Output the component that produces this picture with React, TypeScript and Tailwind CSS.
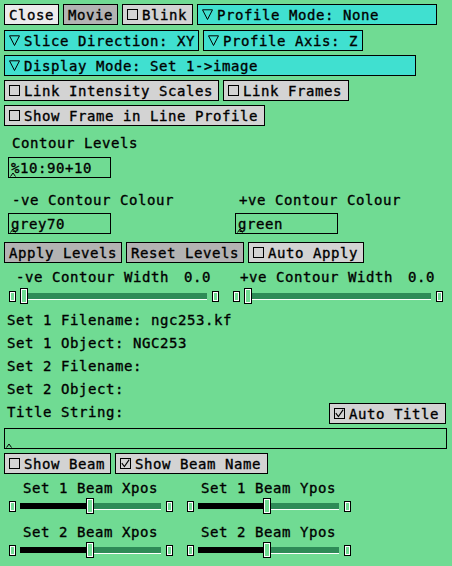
import React from "react";

function CheckBox({ checked }: { checked?: boolean }) {
  return (
    <span className="w-[11px] h-[11px] border border-black shrink-0 flex items-center justify-center">
      {checked && (
        <svg width="9" height="9" viewBox="0 0 9 9">
          <path d="M0.8 4.2 L3.4 7.6 L8.2 0.6" stroke="black" strokeWidth="1.1" fill="none" />
        </svg>
      )}
    </span>
  );
}

function Tri() {
  return (
    <svg width="11" height="11" viewBox="0 0 11 11" className="shrink-0">
      <path d="M0.5 0.8 H10.5 L5.5 10.5 Z" fill="none" stroke="black" strokeWidth="1" />
    </svg>
  );
}

function Caret() {
  return (
    <svg width="6" height="5" viewBox="0 0 6 5" className="absolute left-[1px] bottom-[0px]">
      <path d="M0.5 4.5 L3 1 L5.5 4.5" fill="none" stroke="black" strokeWidth="1" />
    </svg>
  );
}

function Btn({ cls, children }: { cls: string; children: React.ReactNode }) {
  return <div className={"h-[21px] border border-black flex items-center shrink-0 whitespace-pre " + cls}>{children}</div>;
}

function Field({ cls, text }: { cls: string; text?: string }) {
  return (
    <div className={"relative h-[21px] border border-black flex items-center pl-[2px] whitespace-pre " + cls}>
      {text}
      <Caret />
    </div>
  );
}

function EndBox() {
  return <div className="w-[7px] h-[11px] border border-black shadow-[inset_0_0_0_1px_#ffffff] shrink-0" />;
}

function Slider({ black, green, cls }: { black: number; green: number; cls: string }) {
  return (
    <div className={"flex items-center h-[16px] " + cls}>
      <EndBox />
      <div className="w-[4px]" />
      {black > 0 && <div className="h-[6px] bg-black shrink-0" style={{ width: black }} />}
      <div className="w-[8px] h-[16px] border border-black shadow-[inset_0_0_0_1px_#ffffff] shrink-0" />
      <div className="h-[7px] bg-[#2e8b57] border-b border-white shrink-0" style={{ width: green }} />
      <div className="w-[5px]" />
      <EndBox />
    </div>
  );
}

export default function App() {
  return (
    <div className="w-[452px] h-[566px] bg-[#70db93] flex flex-col font-['DejaVu_Sans_Mono',monospace] text-[14px] leading-[16px] tracking-[0.57px] text-black overflow-hidden [-webkit-text-stroke:0.35px_#000]">
      {/* Row 1 */}
      <div className="flex gap-[4px] mt-[4px] ml-[4px]">
        <Btn cls="w-[55px] bg-[#ececec] justify-center">Close</Btn>
        <Btn cls="w-[55px] bg-[#b3b3b3] justify-center">Movie</Btn>
        <Btn cls="w-[71px] bg-[#d3d3d3] pl-[4px] gap-[4px]">
          <CheckBox />
          Blink
        </Btn>
        <Btn cls="w-[240px] bg-[#40e0d0] pl-[4px] gap-[4px]">
          <Tri />
          Profile Mode: None
        </Btn>
      </div>
      {/* Row 2 */}
      <div className="flex gap-[4px] mt-[5px] ml-[4px]">
        <Btn cls="w-[195px] bg-[#40e0d0] pl-[4px] gap-[4px]">
          <Tri />
          Slice Direction: XY
        </Btn>
        <Btn cls="w-[160px] bg-[#40e0d0] pl-[4px] gap-[4px]">
          <Tri />
          Profile Axis: Z
        </Btn>
      </div>
      {/* Row 3 */}
      <div className="flex mt-[4px] ml-[4px]">
        <Btn cls="w-[412px] bg-[#40e0d0] pl-[4px] gap-[4px]">
          <Tri />
          Display Mode: Set 1-&gt;image
        </Btn>
      </div>
      {/* Row 4 */}
      <div className="flex gap-[4px] mt-[4px] ml-[4px]">
        <Btn cls="w-[215px] bg-[#d3d3d3] pl-[4px] gap-[4px]">
          <CheckBox />
          Link Intensity Scales
        </Btn>
        <Btn cls="w-[126px] bg-[#d3d3d3] pl-[4px] gap-[4px]">
          <CheckBox />
          Link Frames
        </Btn>
      </div>
      {/* Row 5 */}
      <div className="flex mt-[4px] ml-[4px]">
        <Btn cls="w-[261px] bg-[#d3d3d3] pl-[4px] gap-[4px]">
          <CheckBox />
          Show Frame in Line Profile
        </Btn>
      </div>

      {/* Contour levels */}
      <div className="mt-[9px] ml-[12px] h-[16px] whitespace-pre">Contour Levels</div>
      <div className="flex mt-[6px] ml-[8px]">
        <Field cls="w-[103px]" text="%10:90+10" />
      </div>

      <div className="flex mt-[14px] ml-[12px] h-[16px] whitespace-pre">
        <div className="w-[227px]">-ve Contour Colour</div>
        <div>+ve Contour Colour</div>
      </div>
      <div className="flex mt-[5px] ml-[8px]">
        <Field cls="w-[103px]" text="grey70" />
        <Field cls="w-[103px] ml-[124px]" text="green" />
      </div>

      <div className="flex gap-[4px] mt-[8px] ml-[4px]">
        <Btn cls="w-[118px] bg-[#b3b3b3] justify-center">Apply Levels</Btn>
        <Btn cls="w-[118px] bg-[#b3b3b3] justify-center">Reset Levels</Btn>
        <Btn cls="w-[116px] bg-[#d3d3d3] pl-[4px] gap-[4px]">
          <CheckBox />
          Auto Apply
        </Btn>
      </div>

      <div className="flex mt-[6px] ml-[16px] h-[16px] whitespace-pre">
        <div className="w-[168px]">-ve Contour Width</div>
        <div className="w-[56px]">0.0</div>
        <div className="w-[168px]">+ve Contour Width</div>
        <div>0.0</div>
      </div>
      <div className="flex mt-[3px] ml-[9px]">
        <Slider black={0} green={179} cls="" />
        <Slider black={0} green={179} cls="ml-[14px]" />
      </div>

      {/* Info lines */}
      <div className="flex flex-col mt-[5px] ml-[7px] whitespace-pre">
        <div className="h-[23px] leading-[23px]">Set 1 Filename: ngc253.kf</div>
        <div className="h-[23px] leading-[23px]">Set 1 Object: NGC253</div>
        <div className="h-[23px] leading-[23px]">Set 2 Filename:</div>
        <div className="h-[23px] leading-[23px]">Set 2 Object:</div>
      </div>
      <div className="flex items-start justify-between ml-[7px] mr-[6px]">
        <div className="h-[23px] leading-[23px] whitespace-pre">Title String:</div>
        <Btn cls="w-[117px] bg-[#d3d3d3] pl-[4px] gap-[4px] mt-[2px]">
          <CheckBox checked />
          Auto Title
        </Btn>
      </div>
      <div className="flex mt-[4px] ml-[4px]">
        <Field cls="w-[443px]" />
      </div>

      <div className="flex gap-[4px] mt-[4px] ml-[4px]">
        <Btn cls="w-[107px] bg-[#d3d3d3] pl-[4px] gap-[4px]">
          <CheckBox />
          Show Beam
        </Btn>
        <Btn cls="w-[153px] bg-[#d3d3d3] pl-[4px] gap-[4px]">
          <CheckBox checked />
          Show Beam Name
        </Btn>
      </div>

      {/* Beam sliders */}
      <div className="flex mt-[6px] ml-[23px] h-[16px] whitespace-pre">
        <div className="w-[178px]">Set 1 Beam Xpos</div>
        <div>Set 1 Beam Ypos</div>
      </div>
      <div className="flex mt-[2px] ml-[9px]">
        <Slider black={66} green={67} cls="" />
        <Slider black={65} green={68} cls="ml-[14px]" />
      </div>
      <div className="flex mt-[10px] ml-[23px] h-[16px] whitespace-pre">
        <div className="w-[178px]">Set 2 Beam Xpos</div>
        <div>Set 2 Beam Ypos</div>
      </div>
      <div className="flex mt-[2px] ml-[9px]">
        <Slider black={66} green={67} cls="" />
        <Slider black={65} green={68} cls="ml-[14px]" />
      </div>
    </div>
  );
}
